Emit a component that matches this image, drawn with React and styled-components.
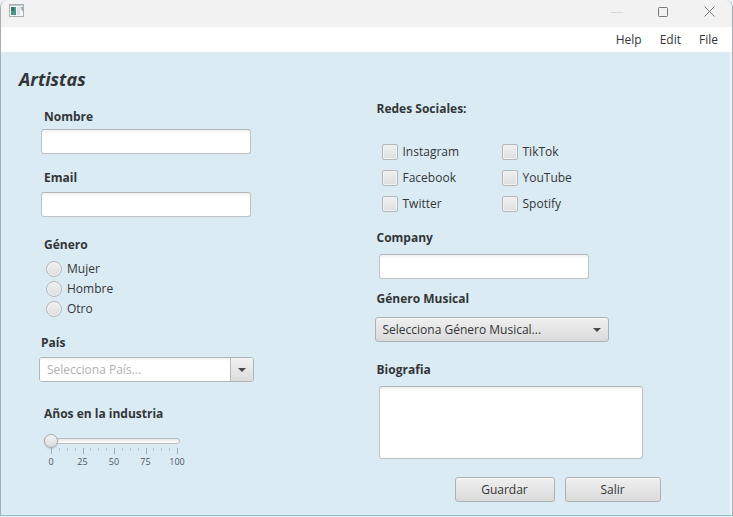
import React, { useState } from "react";
import styled, { createGlobalStyle } from "styled-components";

const GlobalStyle = createGlobalStyle`
  * { box-sizing: border-box; }
  body {
    margin: 0;
    background: #e9f1f4;
    color: #333638;
    font-family: "Open Sans", "Noto Sans", sans-serif;
    font-size: 12px;
    line-height: 16px;
  }
  button, input, select, textarea {
    margin: 0;
    font: inherit;
    color: inherit;
  }
`;

const Window = styled.div`
  display: flex;
  flex-direction: column;
  min-height: calc(100vh - 1px);
  border: 1px solid #a9adb0;
  border-width: 0 1px 1px;
  border-bottom-color: #97bfc9;
  border-radius: 8px 8px 0 0;
  overflow: hidden;
  background: #eff4f7;
`;

const TitleBar = styled.header`
  display: flex;
  align-items: flex-start;
  justify-content: space-between;
  height: 27px;
  padding-left: 8px;
  background: #f2f2f2;
`;

const AppIcon = styled.svg`
  display: block;
  margin-top: 4px;
`;

const WindowControls = styled.div`
  display: flex;
`;

const WindowButton = styled.button`
  display: flex;
  align-items: center;
  justify-content: center;
  width: 46px;
  height: 23px;
  padding: 0;
  border: 0;
  background: transparent;
  color: ${(p) => (p.disabled ? "#d8d8d8" : "#777")};
`;

const MenuBar = styled.nav`
  display: flex;
  align-items: center;
  justify-content: flex-end;
  gap: 18px;
  height: 25px;
  padding-right: 14px;
  background: #fff;
`;

const MenuItem = styled.button`
  padding: 0;
  border: 0;
  background: transparent;
`;

const Page = styled.main`
  flex: 1;
  margin-right: 2px;
  padding: 15px 20px 12px 18px;
  background: #dbebf3;
`;

const Title = styled.h1`
  margin: 0 0 2px;
  font-size: 18px;
  line-height: 24px;
  font-weight: 700;
  font-style: italic;
`;

const Form = styled.form`
  display: grid;
  grid-template-columns: 1fr 1fr;
  padding-left: 20px;
`;

const Column = styled.div`
  display: flex;
  flex-direction: column;
  padding-top: ${(p) => p.$top}px;
`;

const Field = styled.div`
  display: flex;
  flex-direction: column;
  align-items: flex-start;
  gap: ${(p) => p.$gap}px;
  margin-bottom: ${(p) => p.$after}px;
`;

const Group = styled(Field).attrs({ as: "fieldset" })`
  min-width: 0;
  margin-inline: 0;
  margin-top: 0;
  padding: 0;
  border: 0;
`;

const Label = styled.label`
  padding: 0 0 0 ${(p) => p.$indent}px;
  font-weight: 700;
`;

const Legend = styled(Label).attrs({ as: "legend" })`
  margin-bottom: ${(p) => p.$gap}px;
`;

const TextInput = styled.input`
  width: 210px;
  max-width: 100%;
  height: 25px;
  margin-left: ${(p) => p.$indent}px;
  padding: 0 7px;
  border: 1px solid #bcc3c7;
  border-top-color: #afb4b7;
  border-radius: 3px;
  background: linear-gradient(#f1f1f1, #fff 4px);
`;

const TextArea = styled.textarea`
  width: 264px;
  max-width: 100%;
  height: 73px;
  margin-left: 4px;
  padding: 4px 7px;
  border: 1px solid #bcc3c7;
  border-top-color: #afb4b7;
  border-radius: 3px;
  background: linear-gradient(#f1f1f1, #fff 4px);
  resize: none;
`;

const RadioList = styled.div`
  display: flex;
  flex-direction: column;
  gap: 4px;
  padding-left: 7px;
`;

const CheckGrid = styled.div`
  display: grid;
  grid-template-columns: 120px auto;
  row-gap: 10px;
  padding-left: 7px;
`;

const Choice = styled.label`
  display: flex;
  align-items: center;
  gap: 5px;
  height: 16px;
`;

const Mark = styled.input`
  appearance: none;
  flex: none;
  width: 16px;
  height: 16px;
  border: 1px solid #b3b8bb;
  border-radius: ${(p) => (p.type === "radio" ? "50%" : "2px")};
  background: linear-gradient(#f1f1f1, #dedede);
  box-shadow: inset 0 0 0 1px #f2f2f2;

  &:checked {
    background: radial-gradient(circle, #333 0 3px, #e6e6e6 4px);
  }
`;

const Combo = styled.div`
  display: flex;
  width: 215px;
  max-width: 100%;
  height: 25px;
  border: 1px solid #b0b5b8;
  border-radius: 3px;
  background: #fff;
  overflow: hidden;
`;

const ComboInput = styled.input`
  flex: 1;
  min-width: 0;
  padding: 0 7px;
  border: 0;
  background: linear-gradient(#f1f1f1, #fff 3px);

  &::placeholder {
    color: #b1b1b1;
    opacity: 1;
  }
`;

const ComboButton = styled.button`
  display: flex;
  align-items: center;
  justify-content: center;
  width: 23px;
  padding: 0;
  border: 0;
  border-left: 1px solid #b8b8b8;
  background: linear-gradient(#f2f2f2, #dcdcdc);
`;

const SelectBox = styled.div`
  position: relative;
  width: 234px;
  max-width: 100%;
`;

const Select = styled.select`
  appearance: none;
  display: block;
  width: 100%;
  height: 25px;
  padding: 0 24px 0 7px;
  border: 1px solid #aeb2b5;
  border-radius: 3px;
  background: linear-gradient(#f0f0f0, #dadada);
  box-shadow: inset 0 1px 0 #f8f8f8;
`;

const SelectArrow = styled.span`
  position: absolute;
  top: 0;
  right: 8px;
  bottom: 0;
  display: flex;
  align-items: center;
  pointer-events: none;
`;

const SliderBox = styled.div`
  display: flex;
  flex-direction: column;
  padding-left: 5px;
`;

const Slider = styled.input`
  appearance: none;
  width: 136px;
  height: 14px;
  background: transparent;

  &::-webkit-slider-runnable-track {
    height: 6px;
    border: 1px solid #b9bdbf;
    border-radius: 3px;
    background: linear-gradient(#e6e6e6, #fff);
  }

  &::-webkit-slider-thumb {
    appearance: none;
    width: 14px;
    height: 14px;
    margin: -5px 0 0 -1px;
    border: 1px solid #a5a9ac;
    border-radius: 50%;
    background: linear-gradient(#f4f4f4, #dcdcdc);
    box-shadow: 0 1px 2px #0002;
  }
`;

const Ticks = styled.svg`
  display: block;
  margin-left: 7px;
`;

const Scale = styled.div`
  display: flex;
  justify-content: space-between;
  width: 126px;
  margin-left: 7px;
  font-size: 9px;
  color: #4b555b;
`;

const ScaleValue = styled.span`
  display: flex;
  justify-content: center;
  width: 0;
`;

const Actions = styled.div`
  display: flex;
  gap: 10px;
  padding-left: 80px;
`;

const ActionButton = styled.button`
  width: ${(p) => p.$width}px;
  height: 25px;
  padding: 0;
  border: 1px solid #aeb2b5;
  border-radius: 3px;
  background: linear-gradient(#f0f0f0, #dadada);
  box-shadow: inset 0 1px 0 #f8f8f8;
`;

const Arrow = () => (
  <svg width="8" height="4" viewBox="0 0 8 4" aria-hidden="true">
    <path d="M0 0h8L4 4z" fill="#484848" />
  </svg>
);

const genders = ["Mujer", "Hombre", "Otro"];
const networks = ["Instagram", "TikTok", "Facebook", "YouTube", "Twitter", "Spotify"];
const tickIndexes = Array.from({ length: 17 }, (_, i) => i);

export default function App() {
  const [years, setYears] = useState(0);

  return (
    <>
      <GlobalStyle />
      <Window>
        <TitleBar>
          <AppIcon width="15" height="13" viewBox="0 0 15 13" aria-hidden="true">
            <rect x="0.5" y="0.5" width="14" height="12" fill="#f7f8f8" stroke="#a9b0b4" />
            <path d="M1 1.5h13" stroke="#c2c8cc" />
            <rect x="2" y="3" width="5" height="8" fill="#4e9488" />
            <path d="M2 3h3v4H2z" fill="#35776f" />
            <rect x="8" y="3" width="3" height="8" fill="#dce3e8" />
            <path d="M11.5 3H14v4h-1z" fill="#9eabb0" />
          </AppIcon>
          <WindowControls>
            <WindowButton type="button" aria-label="Minimizar" disabled>
              <svg width="12" height="12" viewBox="0 0 12 12">
                <path d="M0 6.5h12" stroke="currentColor" />
              </svg>
            </WindowButton>
            <WindowButton type="button" aria-label="Maximizar">
              <svg width="10" height="10" viewBox="0 0 10 10">
                <rect x="0.5" y="0.5" width="9" height="9" rx="1" fill="none" stroke="currentColor" />
              </svg>
            </WindowButton>
            <WindowButton type="button" aria-label="Cerrar">
              <svg width="11" height="11" viewBox="0 0 11 11">
                <path d="M0.5 0.5l10 10M10.5 0.5l-10 10" stroke="currentColor" />
              </svg>
            </WindowButton>
          </WindowControls>
        </TitleBar>

        <MenuBar>
          <MenuItem type="button">Help</MenuItem>
          <MenuItem type="button">Edit</MenuItem>
          <MenuItem type="button">File</MenuItem>
        </MenuBar>

        <Page>
          <Title>Artistas</Title>
          <Form onSubmit={(e) => e.preventDefault()}>
            <Column $top={16}>
              <Field $gap={4} $after={16}>
                <Label htmlFor="nombre" $indent={5}>Nombre</Label>
                <TextInput id="nombre" type="text" $indent={2} />
              </Field>
              <Field $gap={6} $after={20}>
                <Label htmlFor="email" $indent={5}>Email</Label>
                <TextInput id="email" type="email" $indent={2} />
              </Field>
              <Group $gap={0} $after={18}>
                <Legend $indent={5} $gap={8}>Género</Legend>
                <RadioList>
                  {genders.map((name) => (
                    <Choice key={name}>
                      <Mark type="radio" name="genero" value={name} />
                      {name}
                    </Choice>
                  ))}
                </RadioList>
              </Group>
              <Field $gap={6} $after={24}>
                <Label htmlFor="pais" $indent={2}>País</Label>
                <Combo>
                  <ComboInput id="pais" type="text" placeholder="Selecciona País..." />
                  <ComboButton type="button" aria-label="Mostrar países">
                    <Arrow />
                  </ComboButton>
                </Combo>
              </Field>
              <Field $gap={12} $after={0}>
                <Label htmlFor="anios" $indent={5}>Años en la industria</Label>
                <SliderBox>
                  <Slider
                    id="anios"
                    type="range"
                    min="0"
                    max="100"
                    value={years}
                    onChange={(e) => setYears(Number(e.target.value))}
                  />
                  <Ticks width="127" height="6" viewBox="0 0 127 6" aria-hidden="true">
                    {tickIndexes.map((i) => (
                      <path
                        key={i}
                        d={`M${Math.round((i * 126) / 16) + 0.5} 0v${i % 4 === 0 ? 6 : 3}`}
                        stroke={i % 4 === 0 ? "#a3afb5" : "#b9c6cc"}
                      />
                    ))}
                  </Ticks>
                  <Scale>
                    {[0, 25, 50, 75, 100].map((value) => (
                      <ScaleValue key={value}>{value}</ScaleValue>
                    ))}
                  </Scale>
                </SliderBox>
              </Field>
            </Column>

            <Column $top={8}>
              <Group $gap={0} $after={18}>
                <Legend $indent={2} $gap={27}>Redes Sociales:</Legend>
                <CheckGrid>
                  {networks.map((name) => (
                    <Choice key={name}>
                      <Mark type="checkbox" name="redes" value={name} />
                      {name}
                    </Choice>
                  ))}
                </CheckGrid>
              </Group>
              <Field $gap={8} $after={12}>
                <Label htmlFor="company" $indent={2}>Company</Label>
                <TextInput id="company" type="text" $indent={4} />
              </Field>
              <Field $gap={10} $after={20}>
                <Label htmlFor="musica" $indent={2}>Género Musical</Label>
                <SelectBox>
                  <Select id="musica" defaultValue="">
                    <option value="">Selecciona Género Musical...</option>
                  </Select>
                  <SelectArrow>
                    <Arrow />
                  </SelectArrow>
                </SelectBox>
              </Field>
              <Field $gap={8} $after={18}>
                <Label htmlFor="bio" $indent={2}>Biografia</Label>
                <TextArea id="bio" />
              </Field>
              <Actions>
                <ActionButton type="submit" $width={100}>Guardar</ActionButton>
                <ActionButton type="button" $width={96}>Salir</ActionButton>
              </Actions>
            </Column>
          </Form>
        </Page>
      </Window>
    </>
  );
}
